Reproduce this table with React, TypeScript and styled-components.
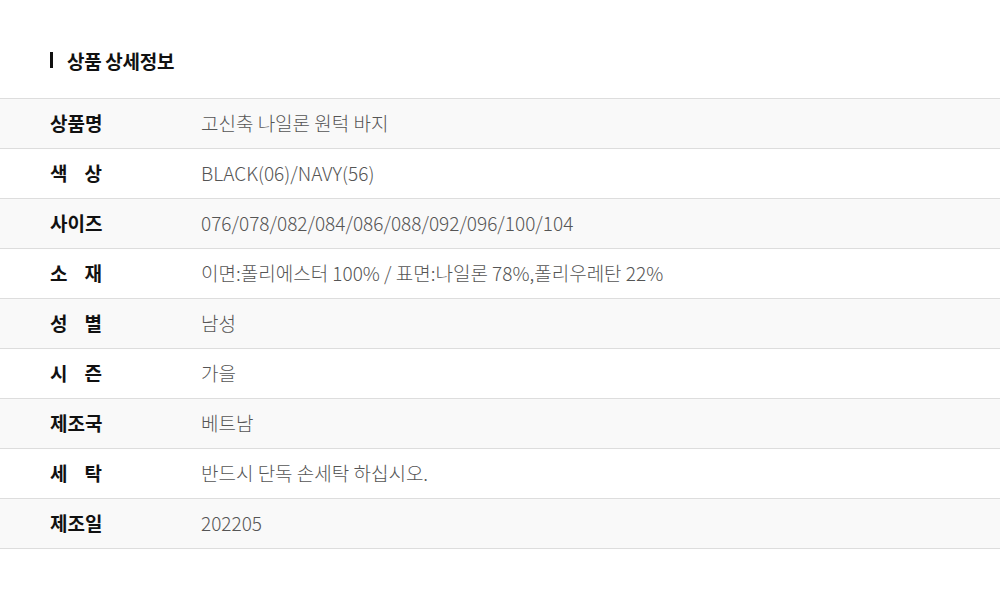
import React from "react";
import styled, { createGlobalStyle } from "styled-components";

const Global = createGlobalStyle`
  html, body { margin: 0; padding: 0; background: #fff; }
  body { font-family: "Noto Sans CJK KR", "Noto Sans", sans-serif; }
`;

const Page = styled.div`
  width: 1000px;
  height: 598px;
  background: #fff;
  padding-top: 46px;
  box-sizing: border-box;
`;

const Title = styled.h2`
  display: flex;
  align-items: center;
  gap: 14px;
  margin: 0 0 24px 50px;
  height: 28px;
  font-size: 19px;
  line-height: 1;
  font-weight: 700;
  color: #111;
  letter-spacing: -0.3px;
  &::before {
    content: "";
    width: 3px;
    height: 16px;
    background: #111;
  }
`;

const Table = styled.div`
  border-top: 1px solid #ddd;
`;

const Row = styled.div<{ $shade: boolean }>`
  display: grid;
  grid-template-columns: 151px 1fr;
  align-items: center;
  height: 49px;
  padding-left: 50px;
  border-bottom: 1px solid #ddd;
  background: ${(p) => (p.$shade ? "#f9f9f9" : "#fff")};
  padding-bottom: 3px;
  box-sizing: border-box;
  height: 50px;
`;

const Label = styled.div`
  width: 52px;
  font-size: 19px;
  line-height: 1;
  font-weight: 700;
  color: #111;
  text-align: justify;
  text-align-last: justify;
  white-space: nowrap;
`;

const Value = styled.div`
  font-size: 19px;
  line-height: 1;
  font-weight: 300;
  color: #555;
`;

const rows: [string, string][] = [
  ["상품명", "고신축 나일론 원턱 바지"],
  ["색 상", "BLACK(06)/NAVY(56)"],
  ["사이즈", "076/078/082/084/086/088/092/096/100/104"],
  ["소 재", "이면:폴리에스터 100% / 표면:나일론 78%,폴리우레탄 22%"],
  ["성 별", "남성"],
  ["시 즌", "가을"],
  ["제조국", "베트남"],
  ["세 탁", "반드시 단독 손세탁 하십시오."],
  ["제조일", "202205"],
];

export default function App() {
  return (
    <Page>
      <Global />
      <Title>상품 상세정보</Title>
      <Table>
        {rows.map(([k, v], i) => (
          <Row key={k} $shade={i % 2 === 0}>
            <Label>{k}</Label>
            <Value>{v}</Value>
          </Row>
        ))}
      </Table>
    </Page>
  );
}
